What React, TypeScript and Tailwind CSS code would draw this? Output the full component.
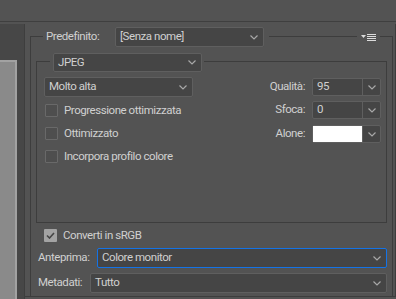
import React from "react";

const Chevron = () => (
  <svg width="8" height="5" viewBox="0 0 8 5" className="shrink-0">
    <polyline points="0.5,0.5 4,4 7.5,0.5" fill="none" stroke="#a8a8a8" strokeWidth="1.2" />
  </svg>
);

function Dropdown({ text, className }: { text: string; className: string }) {
  return (
    <div
      className={`flex items-center justify-between bg-[#454545] border border-[#5f5f5f] rounded-[2px] pl-[4px] pr-[5px] ${className}`}
    >
      <span className="leading-none whitespace-nowrap">{text}</span>
      <Chevron />
    </div>
  );
}

function Spin({ value, white }: { value?: string; white?: boolean }) {
  return (
    <div className="flex h-[18px] w-[69px] border border-[#5f5f5f] rounded-[2px] bg-[#454545]">
      <div className={`flex-1 flex items-center pl-[4px] leading-none ${white ? "bg-white" : ""}`}>{value}</div>
      <div className="w-[18px] border-l border-[#5f5f5f] flex items-center justify-center">
        <Chevron />
      </div>
    </div>
  );
}

function SpinRow({ label, value, white, className }: { label: string; value?: string; white?: boolean; className: string }) {
  return (
    <div className={`flex items-center gap-[7px] ${className}`}>
      <span className="leading-none whitespace-nowrap">{label}</span>
      <Spin value={value} white={white} />
    </div>
  );
}

function Check({ label, checked, className }: { label: string; checked?: boolean; className: string }) {
  return (
    <div className={`flex items-center gap-[6px] h-[13px] ${className}`}>
      <div
        className={`w-[13px] h-[13px] shrink-0 rounded-[1px] flex items-center justify-center ${
          checked ? "bg-[#a3a3a3]" : "bg-[#4e4e4e] border border-[#696969]"
        }`}
      >
        {checked && (
          <svg width="9" height="7" viewBox="0 0 9 7">
            <polyline points="1,3.5 3.5,6 8,1" fill="none" stroke="#454545" strokeWidth="1.6" />
          </svg>
        )}
      </div>
      <span className="leading-none whitespace-nowrap">{label}</span>
    </div>
  );
}

function MenuIcon() {
  return (
    <svg width="15" height="7" viewBox="0 0 15 7">
      <polygon points="0,1 5,1 2.5,4" fill="#dcdcdc" />
      <rect x="6" y="0" width="9" height="1" fill="#dcdcdc" />
      <rect x="6" y="2" width="9" height="1" fill="#dcdcdc" />
      <rect x="6" y="4" width="9" height="1" fill="#dcdcdc" />
      <rect x="6" y="6" width="9" height="1" fill="#dcdcdc" />
    </svg>
  );
}

export default function App() {
  return (
    <div className="w-[396px] h-[299px] bg-[#535353] flex flex-col overflow-hidden font-[Roboto,sans-serif] text-[11.5px] tracking-[-0.45px] text-[#d0d0d0]">
      <div className="h-[21px] shrink-0" />
      <div className="h-px bg-[#3f3f3f] shrink-0" />
      <div className="h-[2px] shrink-0" />
      <div className="flex flex-1 min-h-0">
        {/* left panel */}
        <div className="w-[25px] shrink-0 bg-[#474747] border-r border-[#3e3e3e] flex flex-col">
          <div className="h-[36px] shrink-0" />
          <div className="w-[17px] flex-1 bg-[#8a8a8a] border-t-2 border-r-2 border-[#a2a2a2]" />
        </div>
        {/* main */}
        <div className="flex-1 flex flex-col">
          <div className="flex flex-1 min-h-0">
            <div className="w-[5px] shrink-0" />
            <div className="w-[363px] shrink-0 mt-[12px] border-l border-t border-r border-[#3d3d3d] flex flex-col">
              {/* header legend */}
              <div className="-mt-[10px] h-[20px] flex items-center">
                <div className="w-[12px]" />
                <div className="bg-[#535353] h-full flex items-center pl-[3px] pr-[15px]">
                  <span className="leading-none w-[54px] whitespace-nowrap">Predefinito:</span>
                </div>
                <div className="bg-[#535353] h-full flex items-center pr-[5px]">
                  <Dropdown text="[Senza nome]" className="w-[149px] h-[20px]" />
                </div>
                <div className="flex-1" />
                <div className="bg-[#535353] h-full flex items-center px-[4px]">
                  <MenuIcon />
                </div>
                <div className="w-[12px]" />
              </div>
              {/* inner fieldset */}
              <div className="mt-[14px] mx-[5px] h-[162px] border border-[#3d3d3d] flex flex-col">
                <div className="-mt-[9px] h-[19px] flex">
                  <div className="w-[13px]" />
                  <div className="bg-[#535353] pl-[3px] pr-[2px]">
                    <Dropdown text="JPEG" className="w-[149px] h-[19px]" />
                  </div>
                </div>
                <div className="flex mt-[5px] pl-[7px] pr-[5px]">
                  <div className="w-[149px] flex flex-col">
                    <Dropdown text="Molto alta" className="w-[149px] h-[20px]" />
                    <Check label="Progressione ottimizzata" className="mt-[7px] ml-[1px]" />
                    <Check label="Ottimizzato" className="mt-[10px] ml-[1px]" />
                    <Check label="Incorpora profilo colore" className="mt-[10px] ml-[1px]" />
                  </div>
                  <div className="ml-auto flex flex-col items-end pt-[1px]">
                    <SpinRow label="Qualità:" value="95" className="" />
                    <SpinRow label="Sfoca:" value="0" className="mt-[5px]" />
                    <SpinRow label="Alone:" white className="mt-[6px]" />
                  </div>
                </div>
              </div>
              <Check label="Converti in sRGB" checked className="mt-[6px] ml-[13px]" />
              <div className="flex items-center mt-[6px] pl-[7px] pr-[5px]">
                <span className="leading-none w-[59px] whitespace-nowrap">Anteprima:</span>
                <Dropdown text="Colore monitor" className="flex-1 h-[20px] !border-[#1473e6]" />
              </div>
              <div className="flex items-center mt-[5px] pl-[7px] pr-[5px]">
                <span className="leading-none w-[52px] whitespace-nowrap">Metadati:</span>
                <Dropdown text="Tutto" className="flex-1 h-[20px]" />
              </div>
            </div>
            <div className="w-[2px] shrink-0" />
            <div className="w-px shrink-0 bg-[#3d3d3d]" />
          </div>
          <div className="h-px bg-[#3d3d3d] shrink-0" />
          <div className="h-[2px] shrink-0" />
        </div>
      </div>
    </div>
  );
}
